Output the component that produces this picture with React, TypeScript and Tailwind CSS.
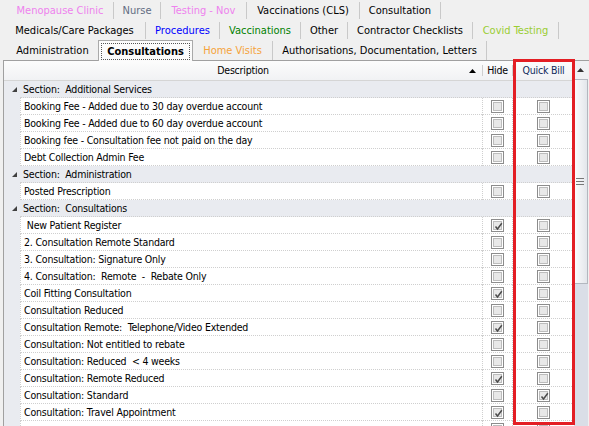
import React from "react";

const FONT = { fontFamily: '"DejaVu Sans Condensed", "Liberation Sans", sans-serif' };

type Tab = { label: string; w: number; color?: string };

const row1: Tab[] = [
  { label: "Menopause Clinic", w: 107, color: "text-[#ee82ee]" },
  { label: "Nurse", w: 47, color: "text-[#626c82]" },
  { label: "Testing - Nov", w: 86, color: "text-[#ee82ee]" },
  { label: "Vaccinations (CLS)", w: 113 },
  { label: "Consultation", w: 81 },
];

const row2: Tab[] = [
  { label: "Medicals/Care Packages", w: 142 },
  { label: "Procedures", w: 74, color: "text-[#0000ff]" },
  { label: "Vaccinations", w: 81, color: "text-[#008000]" },
  { label: "Other", w: 47 },
  { label: "Contractor Checklists", w: 125 },
  { label: "Covid Testing", w: 86, color: "text-[#9acd32]" },
];

type Item =
  | { kind: "group"; label: string }
  | { kind: "row"; label: string; hide?: boolean; quick?: boolean };

const items: Item[] = [
  { kind: "group", label: "Section:  Additional Services" },
  { kind: "row", label: "Booking Fee - Added due to 30 day overdue account" },
  { kind: "row", label: "Booking Fee - Added due to 60 day overdue account" },
  { kind: "row", label: "Booking fee - Consultation fee not paid on the day" },
  { kind: "row", label: "Debt Collection Admin Fee" },
  { kind: "group", label: "Section:  Administration" },
  { kind: "row", label: "Posted Prescription" },
  { kind: "group", label: "Section:  Consultations" },
  { kind: "row", label: " New Patient Register", hide: true },
  { kind: "row", label: "2. Consultation Remote Standard" },
  { kind: "row", label: "3. Consultation: Signature Only" },
  { kind: "row", label: "4. Consultation:  Remote  -  Rebate Only" },
  { kind: "row", label: "Coil Fitting Consultation", hide: true },
  { kind: "row", label: "Consultation Reduced" },
  { kind: "row", label: "Consultation Remote:  Telephone/Video Extended", hide: true },
  { kind: "row", label: "Consultation: Not entitled to rebate" },
  { kind: "row", label: "Consultation: Reduced  < 4 weeks" },
  { kind: "row", label: "Consultation: Remote Reduced", hide: true },
  { kind: "row", label: "Consultation: Standard", quick: true },
  { kind: "row", label: "Consultation: Travel Appointment", hide: true },
  { kind: "row", label: "", hide: true },
];

function TabItem({ tab }: { tab: Tab }) {
  return (
    <div
      className={`flex h-[17px] items-center justify-center whitespace-nowrap border-r border-[#c9c9c9] ${tab.color ?? "text-black"}`}
      style={{ width: tab.w }}
    >
      {tab.label}
    </div>
  );
}

function Checkbox({ checked }: { checked?: boolean }) {
  return (
    <div className="h-[13px] w-[13px] border border-[#8c8c8c] bg-white p-[1px]">
      <div className="relative h-full w-full border border-[#bcbcbc] bg-[#e8e8e8]">
        {checked && (
          <svg viewBox="0 0 9 9" className="absolute left-0 top-0 h-[9px] w-[9px]">
            <path d="M1.5 4.5 L3.5 7 L7.8 1.2" fill="none" stroke="#4b4b4b" strokeWidth="1.5" />
          </svg>
        )}
      </div>
    </div>
  );
}

function GroupRow({ label }: { label: string }) {
  return (
    <div className="flex h-[17px] bg-[#e9ebf0]">
      <div className="flex w-[16px] items-center justify-end pr-[3px]">
        <svg viewBox="0 0 5 5" className="h-[5px] w-[5px]">
          <polygon points="5,0 5,5 0,5" fill="#404040" />
        </svg>
      </div>
      <div className="flex flex-1 items-center whitespace-pre border-b border-dotted border-[#cfcfcf] pl-[3px] text-black">
        {label}
      </div>
    </div>
  );
}

function DataRow({ label, hide, quick }: { label: string; hide?: boolean; quick?: boolean }) {
  return (
    <div className="flex h-[17px]">
      <div className="w-[16px] bg-[#e9ebf0]" />
      <div className="flex flex-1 items-center whitespace-pre border-b border-l border-dotted border-[#cfcfcf] bg-white pl-[3px] text-black">
        {label}
      </div>
      <div className="flex w-[30px] items-center justify-center border-b border-l border-dotted border-[#cfcfcf] bg-white">
        <Checkbox checked={hide} />
      </div>
      <div className="flex w-[62px] items-center justify-center border-b border-l border-dotted border-[#cfcfcf] bg-white pr-[1px]">
        <Checkbox checked={quick} />
      </div>
    </div>
  );
}

export default function App() {
  return (
    <div className="relative h-[426px] w-[589px] overflow-hidden bg-[#f0f0f0] text-[11px] leading-none" style={FONT}>
      {/* tabs */}
      <div className="flex h-[20px] items-center pl-[7px]">
        {row1.map((t) => (
          <TabItem key={t.label} tab={t} />
        ))}
      </div>
      <div className="flex h-[20px] items-center pl-[4px]">
        {row2.map((t) => (
          <TabItem key={t.label} tab={t} />
        ))}
      </div>
      <div className="flex h-[20px] items-end pl-[7px]">
        <div className="flex h-[19px] w-[91px] items-center justify-center">Administration</div>
        <div className="relative z-10 -mb-[1px] flex h-[21px] w-[95px] items-center justify-center border border-b-0 border-[#a9a9a9] bg-[#fbfbfb] px-[2px] pt-[1px]">
          <div className="flex h-[17px] w-full items-center justify-center border border-dotted border-[#555] font-bold">
            Consultations
          </div>
        </div>
        <div className="flex h-[19px] w-[80px] items-center justify-center border-r border-[#c9c9c9] text-[#f5a33a]">
          Home Visits
        </div>
        <div className="flex h-[19px] w-[214px] items-center justify-center border-r border-[#c9c9c9]">
          Authorisations, Documentation, Letters
        </div>
      </div>

      {/* grid */}
      <div className="ml-[3px] flex border-t border-[#a0a0a0] text-[10.5px] tracking-[-0.2px]">
        <div className="flex w-[571px] flex-col border-l border-[#a0a0a0]">
          <div className="flex h-[20px] border-b border-[#d5d5d5] bg-gradient-to-b from-[#fcfcfc] to-[#f1f2f4]">
            <div className="relative flex w-[478px] items-center justify-center">
              Description
              <svg viewBox="0 0 7 4" className="absolute left-[465px] top-[8px] h-[4px] w-[7px]">
                <polygon points="3.5,0 7,4 0,4" fill="#000" />
              </svg>
            </div>
            <div className="my-[4px] w-px bg-[#cfcfcf]" />
            <div className="flex w-[29px] items-center justify-center">Hide</div>
            <div className="my-[4px] w-px bg-[#cfcfcf]" />
            <div className="flex w-[61px] items-center justify-center text-[#102a5c]">Quick Bill</div>
          </div>
          {items.map((it, i) =>
            it.kind === "group" ? (
              <GroupRow key={i} label={it.label} />
            ) : (
              <DataRow key={i} label={it.label} hide={it.hide} quick={it.quick} />
            )
          )}
        </div>

        {/* scrollbar */}
        <div className="flex w-[14px] flex-col bg-[#dadee7]">
          <div className="flex h-[18px] items-center justify-center bg-[#f0f1f4] pr-[2px]">
            <svg viewBox="0 0 7 4" className="h-[4px] w-[7px]">
              <polygon points="3.5,0 7,4 0,4" fill="#333" />
            </svg>
          </div>
          <div className="flex h-[205px] items-center justify-center border border-[#b3b7bf] bg-gradient-to-r from-[#fbfbfc] to-[#e3e6eb] pr-[2px]">
            <svg viewBox="0 0 8 7" className="h-[7px] w-[8px]">
              <path d="M0 0.5H8M0 3.5H8M0 6.5H8" stroke="#777" strokeWidth="1" />
            </svg>
          </div>
        </div>
      </div>

      {/* highlight box */}
      <div className="absolute left-[513px] top-[59px] h-[366px] w-[62px] border-[3px] border-[#e31e24]" />
    </div>
  );
}
